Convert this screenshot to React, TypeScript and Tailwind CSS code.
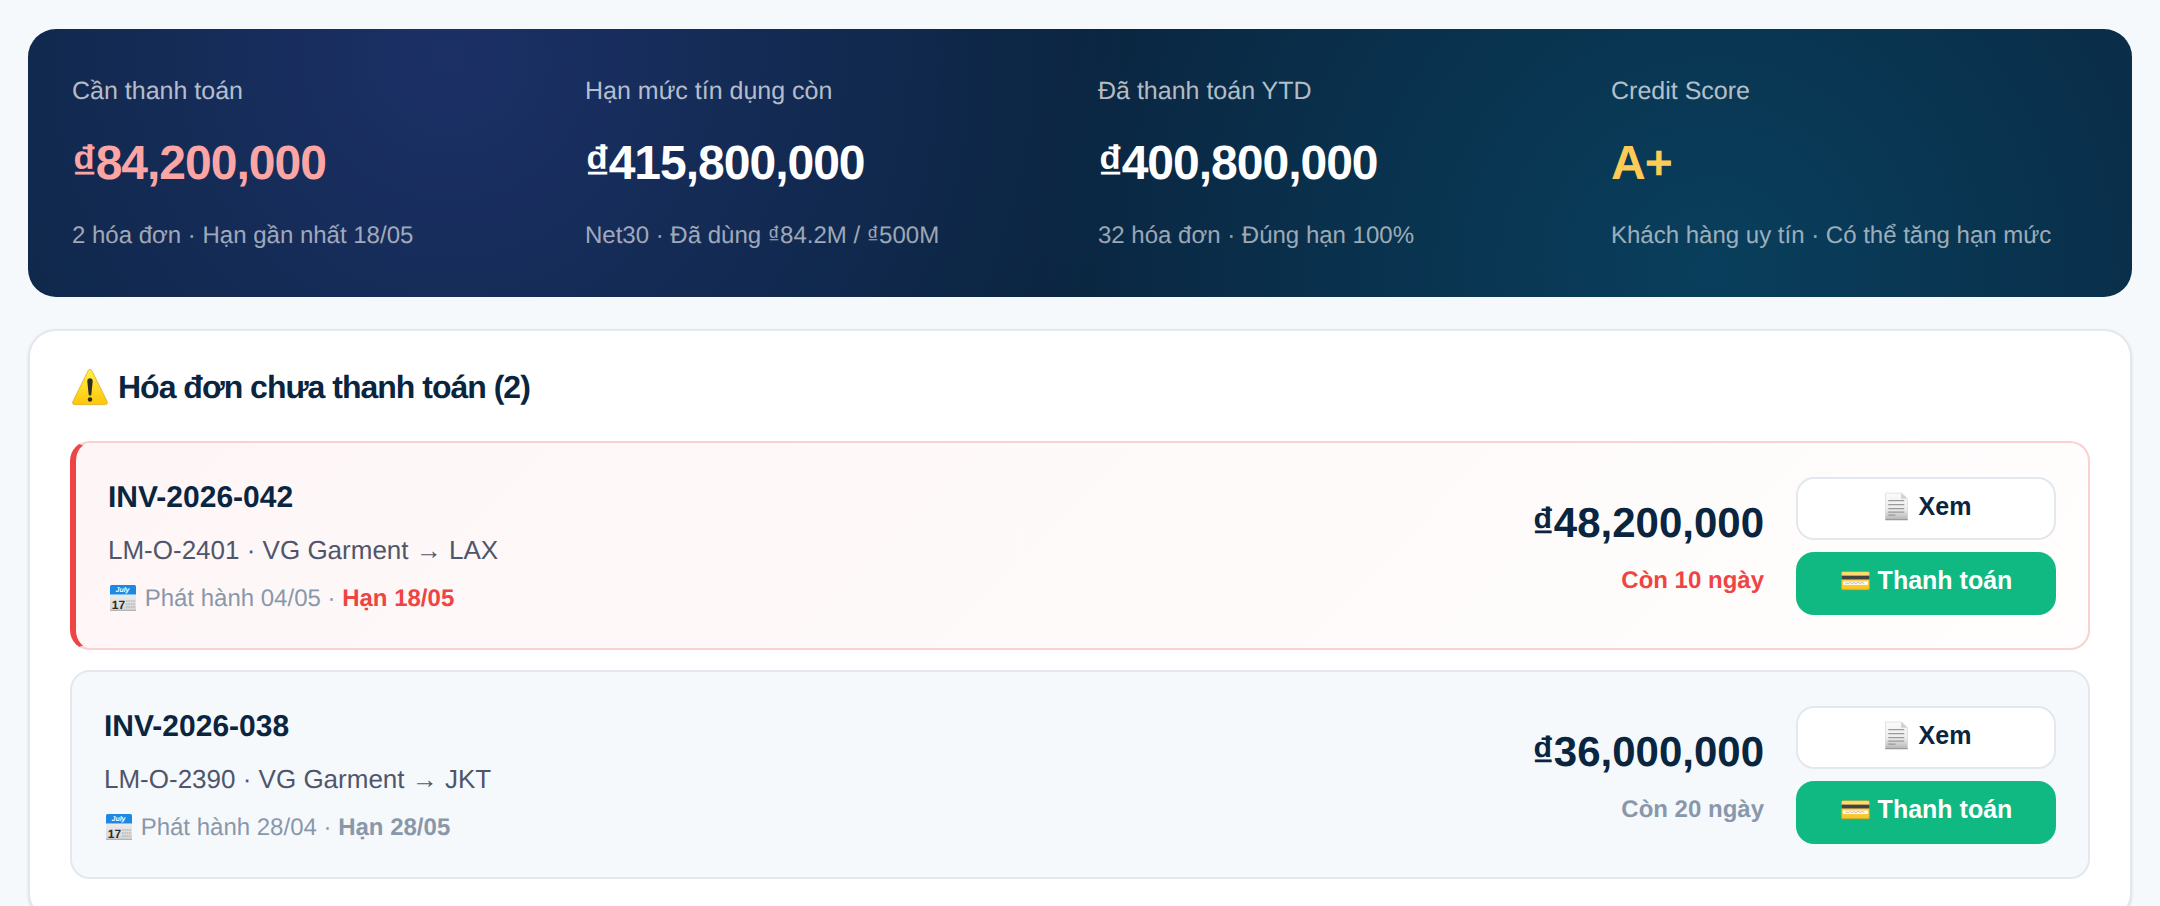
const STATS = [
  { label: "Cần thanh toán", value: "₫84,200,000", note: "2 hóa đơn · Hạn gần nhất 18/05", color: "text-[#fca5a5]" },
  { label: "Hạn mức tín dụng còn", value: "₫415,800,000", note: "Net30 · Đã dùng ₫84.2M / ₫500M", color: "text-white" },
  { label: "Đã thanh toán YTD", value: "₫400,800,000", note: "32 hóa đơn · Đúng hạn 100%", color: "text-white" },
  { label: "Credit Score", value: "A+", note: "Khách hàng uy tín · Có thể tăng hạn mức", color: "text-[#ffcb57]" },
];

type Invoice = { id: string; route: string; issued: string; due: string; amount: string; left: string; urgent: boolean };

const INVOICES: Invoice[] = [
  { id: "INV-2026-042", route: "LM-O-2401 · VG Garment → LAX", issued: "04/05", due: "18/05", amount: "₫48,200,000", left: "Còn 10 ngày", urgent: true },
  { id: "INV-2026-038", route: "LM-O-2390 · VG Garment → JKT", issued: "28/04", due: "28/05", amount: "₫36,000,000", left: "Còn 20 ngày", urgent: false },
];

function WarningIcon() {
  return (
    <svg viewBox="0 0 40 40" className="size-10 shrink-0" aria-hidden="true">
      <defs>
        <linearGradient id="warn" x1="0" y1="0" x2="0" y2="1">
          <stop offset="0" stopColor="#fff04a" />
          <stop offset="1" stopColor="#ffc60a" />
        </linearGradient>
      </defs>
      <path d="M18.2 3.6c.8-1.7 2.8-1.7 3.6 0l15.4 31c.7 1.6-.1 3-1.8 3H4.6c-1.7 0-2.5-1.4-1.8-3z" fill="url(#warn)" stroke="#d9a514" strokeWidth=".7" />
      <path d="M17.3 14.2c0-3.8 5.4-3.8 5.4 0L21.4 27c-.2 2-2.6 2-2.8 0z" fill="#2f2c25" />
      <circle cx="20" cy="32.5" r="2.2" fill="#2f2c25" />
    </svg>
  );
}

function CalendarIcon() {
  return (
    <svg viewBox="0 0 30 30" className="inline-block size-[30px] align-[-7px]" aria-hidden="true">
      <defs>
        <linearGradient id="calPage" x1="0" y1="0" x2="0" y2="1">
          <stop offset="0" stopColor="#fafafa" />
          <stop offset="1" stopColor="#d4d4d4" />
        </linearGradient>
      </defs>
      <rect x="2" y="2" width="26" height="26" rx="1.5" fill="url(#calPage)" />
      <path d="M2 28v-1.3h26V28z" fill="#b5b5b5" />
      <path d="M2 12V3.5A1.5 1.5 0 0 1 3.5 2h23A1.5 1.5 0 0 1 28 3.5V12z" fill="#1e88e5" />
      <path d="M2 11h26v1H2z" fill="#7dc0f5" />
      <text x="14.5" y="9" textAnchor="middle" fontSize="7" fontWeight="700" fontStyle="italic" fill="#fff">July</text>
      <text x="10.5" y="25.5" textAnchor="middle" fontSize="12" fontWeight="700" fill="#2b2b2b">17</text>
      <path d="M18 18h9M18 21h9M18 24h9" stroke="#b9b9b9" strokeWidth="1.6" strokeDasharray="1.6 .8" />
    </svg>
  );
}

function PageIcon() {
  return (
    <svg viewBox="0 0 30 30" className="inline-block size-[31px] align-[-7px]" aria-hidden="true">
      <defs>
        <linearGradient id="page" x1="0" y1="0" x2="0" y2="1">
          <stop offset="0" stopColor="#fbfbfb" />
          <stop offset=".6" stopColor="#ececec" />
          <stop offset="1" stopColor="#b4b4b4" />
        </linearGradient>
      </defs>
      <path d="M4.3 2H20l5.7 5.5V28H4.3z" fill="url(#page)" stroke="#d2d2d2" strokeWidth=".6" />
      <path d="M4 27.4h22v.8H4z" fill="#8c8c8c" />
      <path d="M19.5 2v5.5h6z" fill="#d0d0d0" />
      <path d="M7 9.3h15.5M7 13.2h15.5M7 17h15.5M7 20.5h15.5M7 23.3h7" stroke="#9a9a9a" strokeWidth="1.1" />
    </svg>
  );
}

function CardIcon() {
  return (
    <svg viewBox="0 0 30 30" className="inline-block size-[31px] align-[-7px]" aria-hidden="true">
      <defs>
        <linearGradient id="card" x1="0" y1="0" x2="0" y2="1">
          <stop offset="0" stopColor="#ffe07a" />
          <stop offset="1" stopColor="#fcc21b" />
        </linearGradient>
      </defs>
      <rect x="1.5" y="6.5" width="27" height="17.5" rx="1.3" fill="url(#card)" stroke="#d99a2b" strokeWidth=".5" />
      <path d="M1.5 10.3h27V14h-27z" fill="#424242" />
      <path d="M3 16h24v3.2H3z" fill="#fff" />
      <path d="M5 18.3l1.5-1 1.5.8 2-1.3 1.5 1.2 2-1 2 1 2-1.2 2 1 2-.8 2 .8" fill="none" stroke="#9b9b9b" strokeWidth=".7" />
    </svg>
  );
}

function InvoiceRow({ invoice }: { invoice: Invoice }) {
  const box = invoice.urgent
    ? "border-[#fbd0d0] border-l-[6px] border-l-[#ef4444] bg-linear-135 from-[#fef6f6] to-[#fffdfd]"
    : "border-[#e3e8ee] bg-[#f6f9fc]";
  const accent = invoice.urgent ? "text-[#ef4444]" : "text-[#8898aa]";
  return (
    <li className={`flex items-center gap-8 rounded-[20px] border-2 p-8 ${box}`}>
      <div className="min-w-0 flex-1">
        <h3 className="text-[30px] leading-[46px] font-bold">{invoice.id}</h3>
        <p className="mt-1.5 text-[26px] leading-[46px] text-[#4f566b]">{invoice.route}</p>
        <p className="mt-2 text-[24px] leading-[35px] text-[#8898aa]">
          <CalendarIcon /> Phát hành {invoice.issued} · <strong className={`font-bold ${accent}`}>Hạn {invoice.due}</strong>
        </p>
      </div>
      <div className="pb-0.5 text-right">
        <div className="text-[42px] leading-[64px] font-bold">{invoice.amount}</div>
        <div className={`mt-2 text-[24px] leading-[36px] font-bold ${accent}`}>{invoice.left}</div>
      </div>
      <div className="flex w-[260px] flex-col gap-3">
        <button type="button" className="h-[63px] rounded-[18px] border-2 border-[#e3e8ee] bg-white pb-0.5 text-[25px] font-bold"><PageIcon /> Xem</button>
        <button type="button" className="h-[63px] rounded-[18px] bg-[#10b981] pb-1 text-[25px] font-bold text-white"><CardIcon /> Thanh toán</button>
      </div>
    </li>
  );
}

export default function App() {
  return (
    <main className="flex min-h-screen flex-col gap-8 bg-[#f6f9fc] px-7 pt-[29px] font-['Liberation_Sans',Arial,sans-serif] text-[#0a2540] [text-rendering:geometricPrecision]">
      <section className="grid grid-cols-4 gap-9 rounded-[28px] bg-[#0a2540] bg-[radial-gradient(circle_at_20%_10%,rgba(99,91,255,0.2),transparent_40%),radial-gradient(circle_at_80%_90%,rgba(0,212,255,0.15),transparent_40%)] px-11 py-10">
        {STATS.map(stat => (
          <div key={stat.label}>
            <div className="text-[25px] leading-[44px] text-white/70">{stat.label}</div>
            <div className={`my-2 text-[48px] leading-[86px] font-bold tracking-[-1px] ${stat.color}`}>{stat.value}</div>
            <div className="text-[24px] leading-[42px] text-white/60">{stat.note}</div>
          </div>
        ))}
      </section>
      <section className="rounded-[28px] border-2 border-[#e3e8ee] bg-white p-10 shadow-sm">
        <h2 className="mb-[38px] flex h-8 items-center gap-2 text-[32px] leading-[32px] font-bold tracking-[-1px]"><WarningIcon /> Hóa đơn chưa thanh toán (2)</h2>
        <ul className="flex flex-col gap-5">
          {INVOICES.map(invoice => <InvoiceRow key={invoice.id} invoice={invoice} />)}
        </ul>
      </section>
    </main>
  );
}
